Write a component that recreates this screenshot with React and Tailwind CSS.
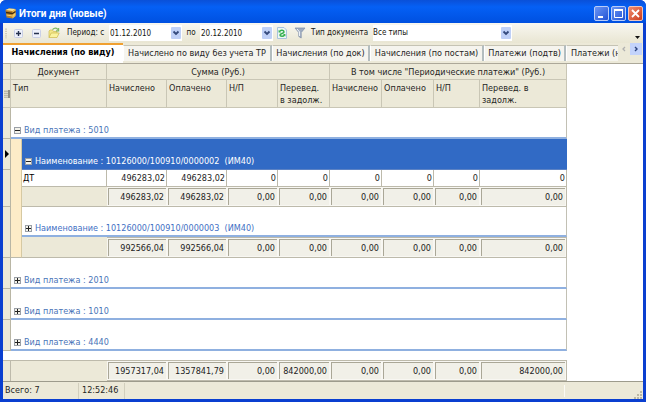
import React from 'react';

const AMOUNT = 'text-[#1c1c1c]';

const TABS = [
  { label: 'Начислено по виду без учета ТР', width: 'w-[149px]' },
  { label: 'Начисления (по док)', width: 'w-[98px]' },
  { label: 'Начисления (по постам)', width: 'w-[114px]' },
  { label: 'Платежи (подтв)', width: 'w-[82px]' },
];

const Plus = ({ minus = false }) => (
  <svg viewBox="0 0 7 7" className="size-[7px] shrink-0" shapeRendering="crispEdges" aria-hidden="true">
    <rect width="7" height="7" fill="#9a9fa6" />
    <rect x="1" y="1" width="5" height="5" fill="#f3f2ea" />
    <rect x="1" y="3" width="5" height="1" fill="#222" />
    {!minus && <rect x="3" y="1" width="1" height="5" fill="#222" />}
  </svg>
);

const Chevron = () => (
  <svg viewBox="0 0 10 12" className="h-3 w-[10px]" aria-hidden="true">
    <rect width="10" height="12" rx="1" fill="#bfd0f7" />
    <path d="M2.5 4.5 L5 7 L7.5 4.5" fill="none" stroke="#34497c" strokeWidth="1.8" />
  </svg>
);

function ToolButton({ label, children }) {
  return (
    <button type="button" aria-label={label} className="flex h-4 w-[18px] shrink-0 items-center justify-center">
      {children}
    </button>
  );
}

function DateField({ label, value }) {
  return (
    <div className="flex h-4 w-[73px] shrink-0 items-center bg-white">
      <input aria-label={label} defaultValue={value} className="h-4 w-[62px] min-w-0 bg-transparent pl-px outline-none" />
      <button type="button" aria-label="Открыть календарь"><Chevron /></button>
    </div>
  );
}

function TitleBar() {
  return (
    <header className="flex h-[23px] shrink-0 items-center bg-linear-to-b from-[#0a50d8] via-[#0560f5] via-30% to-[#0050e0] pl-[5px] pr-[3px] pt-[3px]">
      <svg viewBox="0 0 11 11" className="mr-[3px] size-[11px]" aria-hidden="true">
        <path d="M.5 2 L4 .5 L10.5 1 V8 L7.5 10.5 L1.5 9.5Z" fill="#b9822c" />
        <path d="M.5 2 L4 .5 L10.5 1 L7.5 3Z" fill="#f9e49a" />
        <path d="M7.5 3 L10.5 1 V8 L7.5 10.5Z" fill="#e9bb52" />
        <path d="M1 4.5 L7.5 5.5 L10.5 3.5" fill="none" stroke="#3f2c12" strokeWidth="1.3" />
        <path d="M1.5 7 L7.5 8 L10.5 6" fill="none" stroke="#f3cf6b" />
      </svg>
      <h1 className="flex-1 font-[Roboto,'DejaVu_Sans_Condensed',sans-serif] text-[10px] font-bold text-white">Итоги дня (новые)</h1>
      <div className="flex gap-[2px]">
        <button type="button" aria-label="Свернуть" className="flex size-[15px] items-center justify-center rounded-xs border border-[#b9ccf8] bg-linear-to-br from-[#6a94f5] to-[#2452d4]">
          <svg viewBox="0 0 13 13" className="size-[13px]"><rect x="3" y="9" width="5" height="2" fill="#fff" /></svg>
        </button>
        <button type="button" aria-label="Развернуть" className="flex size-[15px] items-center justify-center rounded-xs border border-[#b9ccf8] bg-linear-to-br from-[#6a94f5] to-[#2452d4]">
          <svg viewBox="0 0 13 13" className="size-[13px]"><path d="M2.5 3 V10.5 H10.5 V3" fill="none" stroke="#fff" /><rect x="2" y="2" width="9" height="2" fill="#fff" /></svg>
        </button>
        <button type="button" aria-label="Закрыть" className="flex size-[15px] items-center justify-center rounded-xs border border-[#f0c4b8] bg-linear-to-br from-[#ee8a6c] to-[#cc3a17]">
          <svg viewBox="0 0 13 13" className="size-[13px]"><path d="M3 3 L10 10 M10 3 L3 10" stroke="#fff" strokeWidth="1.8" /></svg>
        </button>
      </div>
    </header>
  );
}

function Toolbar() {
  return (
    <div className="flex h-5 shrink-0 items-center bg-linear-to-b from-[#f8f7f1] to-[#e9e6d3] text-[8px] text-[#16160f]">
      <svg viewBox="0 0 8 16" className="h-4 w-[6px] shrink-0" aria-hidden="true">
        <path d="M4 2 V15" stroke="#c5c1ae" strokeWidth="2" strokeDasharray="1.5 1.5" />
      </svg>
      <ToolButton label="Развернуть все">
        <svg viewBox="0 0 9 9" className="size-[9px]"><rect x=".5" y=".5" width="8" height="8" rx="1" fill="#eef1fb" stroke="#c9cfe6" /><path d="M2 4.5 H7 M4.5 2 V7" stroke="#26324f" strokeWidth="1.4" /></svg>
      </ToolButton>
      <ToolButton label="Свернуть все">
        <svg viewBox="0 0 9 9" className="size-[9px]"><rect x=".5" y=".5" width="8" height="8" rx="1" fill="#eef1fb" stroke="#c9cfe6" /><path d="M2 4.5 H7" stroke="#26324f" strokeWidth="1.4" /></svg>
      </ToolButton>
      <ToolButton label="Открыть">
        <svg viewBox="0 0 12 12" className="size-3">
          <path d="M1 10.5 V4 L2 3 H4.5 L5.5 4.5 H9 V6" fill="#f3e78a" stroke="#cdbb55" strokeWidth=".7" />
          <path d="M1 10.5 L3.2 6 H11.2 L9 10.5Z" fill="#faf3a0" stroke="#cdb94e" strokeWidth=".7" />
          <path d="M4.5 2.6 C6.5 .4 9 .8 10 2.8 M10.6 1 V3.8 H8" fill="none" stroke="#7db867" strokeWidth="1.2" />
        </svg>
      </ToolButton>
      <span className="ml-1 w-[42px] shrink-0 whitespace-nowrap">Период: с</span>
      <DateField label="Период с" value="01.12.2010" />
      <span className="w-[18px] shrink-0 text-center">по</span>
      <DateField label="Период по" value="20.12.2010" />
      <ToolButton label="Обновить">
        <svg viewBox="0 0 10 12" className="h-3 w-[10px]">
          <path d="M.5 .5 H7 L9.5 3 V11.5 H.5Z" fill="#eef7f4" stroke="#a8c3dd" />
          <path d="M2.5 4.6 C3.5 2.4 7 3 7 5 C7 6.4 3 6.6 3 8 C3 9.4 6.4 9.8 7.5 8" fill="none" stroke="#36b050" strokeWidth="1.5" />
          <path d="M1.6 3 V5.4 H4Z M8.4 9.6 V7 H6Z" fill="#36b050" />
        </svg>
      </ToolButton>
      <ToolButton label="Фильтр">
        <svg viewBox="0 0 12 12" className="size-3">
          <path d="M1 1 H11 L7.2 5.5 V11 L4.8 9.5 V5.5Z" fill="#9eabc0" stroke="#8594ab" strokeWidth=".8" />
          <path d="M3 2 L5.6 5 V9" fill="none" stroke="#f4f8fd" />
        </svg>
      </ToolButton>
      <label htmlFor="doctype" className="ml-[2px] w-[62px] shrink-0 whitespace-nowrap">Тип документа</label>
      <div className="relative h-4 w-[139px]">
        <select id="doctype" className="h-4 w-full appearance-none bg-white outline-none">
          <option>Все типы</option>
        </select>
        <span className="pointer-events-none absolute right-px top-[2px]"><Chevron /></span>
      </div>
      <button type="button" aria-label="Параметры панели" className="ml-auto mr-[2px] flex h-4 w-2 items-end justify-center pb-[2px]">
        <svg viewBox="0 0 5 3" className="h-[3px] w-[5px]"><path d="M0 0 H5 L2.5 3Z" fill="#111" /></svg>
      </button>
    </div>
  );
}

function TabStrip() {
  return (
    <div className="flex h-[21px] shrink-0 border-b border-[#aca899] bg-[#ece9d8] text-[9px]">
      <div role="tablist" className="flex min-w-0 flex-1 overflow-hidden whitespace-nowrap">
        <button type="button" role="tab" aria-selected="true" className="h-5 w-[120px] shrink-0 border-t-2 border-[#f0a030] bg-white pb-[2px] font-bold text-black">
          Начисления (по виду)
        </button>
        {TABS.map((t) => (
          <button key={t.label} type="button" role="tab" aria-selected="false" className={`mb-[2px] mt-[2px] shrink-0 border-l border-r-2 border-t border-l-white border-r-[#b3bdbf] border-t-[#c5c3b4] bg-[#f5f4ee] ${t.width}`}>
            {t.label}
          </button>
        ))}
        <button type="button" role="tab" aria-selected="false" className="mb-[2px] mt-[2px] shrink-0 border-l border-t border-l-white border-t-[#c5c3b4] bg-[#f5f4ee] px-1">
          Платежи (неподтв)
        </button>
      </div>
      <div className="flex h-[14px] w-[25px] shrink-0">
        <button type="button" aria-label="Назад" className="flex h-3 w-3 items-center justify-center"><svg viewBox="0 0 6 6" className="size-[6px]"><path d="M4 1 L2 3 L4 5" fill="none" stroke="#b0b0b0" strokeWidth="1.3" /></svg></button>
        <button type="button" aria-label="Вперед" className="flex h-3 w-3 items-center justify-center bg-[#c3d3fb]"><svg viewBox="0 0 6 6" className="size-[6px]"><path d="M2 1 L4 3 L2 5" fill="none" stroke="#2b437f" strokeWidth="1.4" /></svg></button>
      </div>
    </div>
  );
}

const Columns = () => (
  <colgroup>
    <col className="w-2" />
    <col className="w-[11px]" />
    <col className="w-[85px]" />
    <col className="w-[60px]" />
    <col className="w-[60px]" />
    <col className="w-[51px]" />
    <col className="w-[52px]" />
    <col className="w-[52px]" />
    <col className="w-[52px]" />
    <col className="w-[46px]" />
    <col className="w-[87px]" />
  </colgroup>
);

function Head({ children, span = 1 }) {
  return (
    <th colSpan={span} className="h-7 border-b border-r border-[#c9c6b5] pl-[2px] pt-[2px] text-left align-top font-normal leading-3 whitespace-pre-line">
      {children}
    </th>
  );
}

function Indicator({ current = false, rows = 1 }) {
  return (
    <td rowSpan={rows} className="border-b border-r border-[#b9b6a5] bg-[#ece9d8]">
      {current && <svg viewBox="0 0 4 8" className="mx-auto h-2 w-1"><path d="M0 0 L4 4 L0 8Z" fill="#000" /></svg>}
    </td>
  );
}

function Group({ children, open = false }) {
  return (
    <tr>
      <Indicator />
      <td colSpan={10} className="h-[31px] border-b-2 border-r border-b-[#8fb0e0] border-r-[#c2c0b4] bg-white pb-px pl-[3px] align-bottom text-[#4a74b8]">
        <span className="flex items-center gap-[3px] leading-3"><Plus minus={open} />{children}</span>
      </td>
    </tr>
  );
}

function SummaryCells({ values }) {
  return values.map((v, i) => (
    <td key={i} className="border-b border-t border-[#bdbaab] bg-[#f8f7f2] p-px last:border-r">
      <div className={`flex h-[17px] items-center justify-end border-l border-t border-[#aaa797] bg-[#f1f0e8] pr-[2px] ${AMOUNT}`}>{v}</div>
    </td>
  ));
}

function Grid() {
  return (
    <table className="w-[564px] table-fixed border-separate border-spacing-0 leading-3">
      <Columns />
      <thead className="bg-[#ece9d8]">
        <tr>
          <th className="border-b border-r border-[#c9c6b5]" aria-label="Строка" />
          <th colSpan={2} className="h-4 border-b border-r border-[#c9c6b5] font-normal">Документ</th>
          <th colSpan={4} className="border-b border-r border-[#c9c6b5] font-normal">Сумма (Руб.)</th>
          <th colSpan={4} className="border-b border-r border-[#c9c6b5] font-normal">В том числе "Периодические платежи" (Руб.)</th>
        </tr>
        <tr>
          <th className="border-b border-r border-[#c9c6b5]" aria-label="Выбор столбцов">
            <svg viewBox="0 0 6 8" className="mx-auto h-2 w-[6px]"><path d="M1 .5 V8 M3 .5 V8" stroke="#8b897d" strokeDasharray="1.5 .7" /><path d="M5 0 V8" stroke="#55534a" strokeWidth="1.2" /></svg>
          </th>
          <Head span={2}>Тип</Head>
          <Head>Начислено</Head>
          <Head>Оплачено</Head>
          <Head>Н/П</Head>
          <Head>{'Перевед.\nв задолж.'}</Head>
          <Head>Начислено</Head>
          <Head>Оплачено</Head>
          <Head>Н/П</Head>
          <Head>{'Перевед. в\nзадолж.'}</Head>
        </tr>
      </thead>
      <tbody>
        <Group open>Вид платежа : 5010</Group>
        <tr>
          <Indicator current />
          <td rowSpan={5} className="border-b border-r border-b-[#bdbaab] border-r-[#d6c9a2] bg-[#fdecc8]" />
          <td colSpan={9} className="h-[31px] border-b border-[#5c82c4] bg-[#316ac5] pb-[2px] pl-[3px] align-bottom text-white">
            <span className="flex items-center gap-[3px] leading-3"><Plus minus /><span>Наименование : 10126000/100910/0000002&nbsp; (ИМ40)</span></span>
          </td>
        </tr>
        <tr>
          <Indicator rows={2} />
          <td className="h-4 border-r border-[#bdbaab] bg-white pl-px text-black">ДТ</td>
          {['496283,02', '496283,02', '0', '0', '0', '0', '0', '0'].map((v, i) => (
            <td key={i} className={`border-r border-[#bdbaab] bg-white pr-px text-right ${AMOUNT}`}>{v}</td>
          ))}
        </tr>
        <tr>
          <td className="border-b border-t border-[#bdbaab] bg-[#ece9d8]" />
          <SummaryCells values={['496283,02', '496283,02', '0,00', '0,00', '0,00', '0,00', '0,00', '0,00']} />
        </tr>
        <tr>
          <Indicator rows={2} />
          <td colSpan={9} className="h-[30px] border-b-2 border-r border-b-[#8fb0e0] border-r-[#c2c0b4] bg-white pb-px pl-[3px] align-bottom text-[#3f70c4]">
            <span className="flex items-center gap-[3px] leading-3"><Plus /><span>Наименование : 10126000/100910/0000003&nbsp; (ИМ40)</span></span>
          </td>
        </tr>
        <tr>
          <td className="border-b border-[#bdbaab] bg-[#ece9d8]" />
          <SummaryCells values={['992566,04', '992566,04', '0,00', '0,00', '0,00', '0,00', '0,00', '0,00']} />
        </tr>
        <Group>Вид платежа : 2010</Group>
        <Group>Вид платежа : 1010</Group>
        <Group>Вид платежа : 4440</Group>
      </tbody>
    </table>
  );
}

function Totals() {
  return (
    <table aria-label="Итого" className="mt-auto w-[564px] table-fixed border-separate border-spacing-0 leading-3">
      <Columns />
      <tbody>
        <tr>
          <td className="border-r border-t border-[#bdbaab] bg-[#ece9d8]" />
          <td colSpan={2} className="border-t border-[#bdbaab] bg-[#ece9d8]" />
          <SummaryCells values={['1957317,04', '1357841,79', '0,00', '842000,00', '0,00', '0,00', '0,00', '842000,00']} />
        </tr>
      </tbody>
    </table>
  );
}

export default function App() {
  return (
    <div className="flex h-screen flex-col overflow-hidden rounded-t-md bg-[#0a3fd0] font-['DejaVu_Sans_Condensed','DejaVu_Sans',sans-serif] text-[9px] text-[#26261f]">
      <TitleBar />
      <div className="mx-[3px] mb-[3px] flex min-h-0 flex-1 flex-col bg-white">
        <Toolbar />
        <TabStrip />
        <main className="flex min-h-0 flex-1 flex-col bg-white">
          <Grid />
          <Totals />
        </main>
        <footer className="flex h-[18px] shrink-0 items-center border-t border-[#9d9b8c] bg-[#ece9d8]">
          <span className="flex h-4 w-[76px] items-center border-r border-[#d2cfbd] pl-[2px]">Всего: 7</span>
          <span className="flex h-4 w-[46px] items-center border-r border-[#d2cfbd] pl-[3px]">12:52:46</span>
          <span className="mr-[68px] h-3 flex-1 border-r border-[#fbfaf4]" />
          <svg viewBox="0 0 9 9" className="mr-px mt-auto size-[9px]" aria-hidden="true">
            <path d="M7 1h2v2h-2z M4 4h2v2h-2z M7 4h2v2h-2z M1 7h2v2h-2z M4 7h2v2h-2z M7 7h2v2h-2z" fill="#bcb8a5" />
          </svg>
        </footer>
      </div>
    </div>
  );
}
